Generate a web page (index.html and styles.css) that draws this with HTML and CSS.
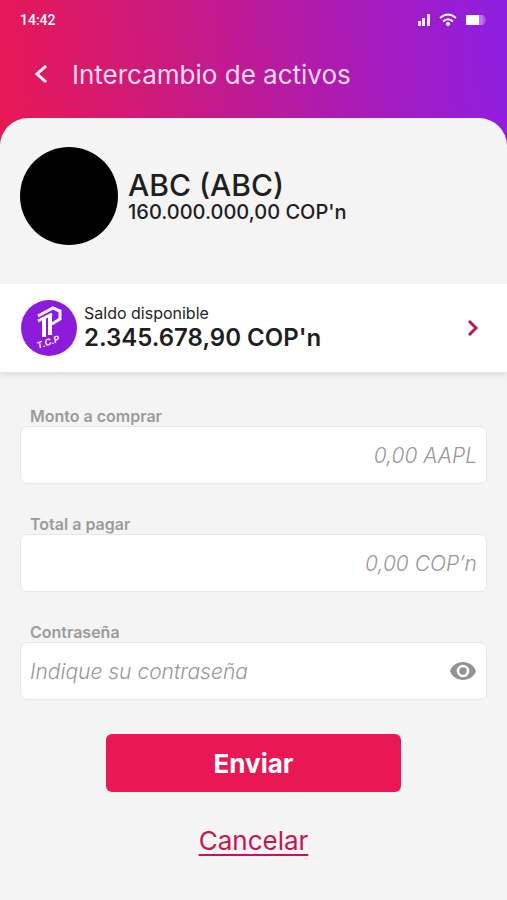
FILE: index.html
```html
<!DOCTYPE html>
<html lang="es">
<head>
    <meta charset="UTF-8">
    <meta name="viewport" content="width=device-width, initial-scale=1.0">
    <title>Intercambio de activos</title>
    <link rel="stylesheet" href="styles.css">
</head>
<body>
    <header class="header">
        <div class="status-bar">
            <span>14:42</span>
            <div class="status-icons">
                <svg width="14" height="14" viewBox="0 0 14 14" fill="#fff" opacity="0.9" aria-hidden="true">
                    <rect x="1" y="8" width="3" height="5"/>
                    <rect x="5" y="5" width="3" height="8"/>
                    <rect x="10" y="1" width="3" height="12"/>
                </svg>
                <svg width="18" height="14" viewBox="0 0 18 14" fill="none" stroke="#fff" stroke-width="2" aria-hidden="true">
                    <path d="M1 5 Q9 -2 17 5"/>
                    <path d="M4 8.500 Q9 4 14 8.500"/>
                    <circle cx="9" cy="11" r="2" fill="#fff" stroke="none"/>
                </svg>
                <svg width="22" height="14" viewBox="0 0 22 14" aria-hidden="true">
                    <path d="M2 2H18V12H2a1 1 0 0 1-1-1V3a1 1 0 0 1 1-1z" fill="#fff" opacity="0.4"/>
                    <path d="M2 2H14V12H2a1 1 0 0 1-1-1V3a1 1 0 0 1 1-1z" fill="#fff"/>
                    <path d="M18 2Q21 4 21 7Q21 10 18 12z" fill="#fff" opacity="0.25"/>
                </svg>
            </div>
        </div>
        <div class="title-bar">
            <button type="button" class="back" aria-label="Volver">
                <svg width="14" height="20" viewBox="0 0 14 20" fill="none" stroke="#fff" stroke-width="3" aria-hidden="true">
                    <path d="M12 2 L3 10 L12 18"/>
                </svg>
            </button>
            <h1>Intercambio de activos</h1>
        </div>
    </header>

    <main class="sheet">
        <section class="asset">
            <div class="asset-logo"></div>
            <div>
                <h2>ABC (ABC)</h2>
                <p class="asset-price">160.000.000,00 COP'n</p>
            </div>
        </section>

        <a href="#" class="balance">
            <svg class="balance-logo" width="58" height="58" viewBox="0 0 58 58" aria-hidden="true">
                <circle cx="29" cy="29" r="28" fill="#8d1bdc"/>
                <g fill="none" stroke="#fff">
                    <path d="M18 17 L33 9 L40 12 V20 L32 25" stroke-width="3"/>
                    <path d="M18 22 L32 15" stroke-width="3"/>
                    <path d="M24 20 V38" stroke-width="4"/>
                    <path d="M30 17 V36" stroke-width="4"/>
                </g>
                <text x="18" y="50" class="logo-text" transform="rotate(-19 18 50)">T.C.P</text>
            </svg>
            <div class="balance-info">
                <p class="balance-label">Saldo disponible</p>
                <p class="balance-amount">2.345.678,90 COP'n</p>
            </div>
            <svg width="12" height="16" viewBox="0 0 12 16" fill="none" stroke="#c2184f" stroke-width="3" aria-hidden="true">
                <path d="M2 1 L9 8 L2 15"/>
            </svg>
        </a>

        <form class="form">
            <div class="form-group">
                <label for="monto">Monto a comprar</label>
                <input type="text" id="monto" class="amount" placeholder="0,00 AAPL">
            </div>
            <div class="form-group">
                <label for="total">Total a pagar</label>
                <input type="text" id="total" class="amount" placeholder="0,00 COP’n">
            </div>
            <div class="form-group">
                <label for="password">Contraseña</label>
                <div class="password">
                    <input type="password" id="password" placeholder="Indique su contraseña">
                    <button type="button" class="show-password" aria-label="Mostrar contraseña">
                        <svg width="28" height="20" viewBox="0 0 28 20" aria-hidden="true">
                            <path fill="#929292" fill-rule="evenodd" d="M14 1C8 1 3 4.700 1 10c2 5.300 7 9 13 9s11-3.700 13-9C25 4.700 20 1 14 1zM14 16.300a6.300 6.300 0 1 1 0-12.600a6.300 6.300 0 0 1 0 12.600z"/>
                            <circle cx="14" cy="10" r="3.700" fill="#929292"/>
                        </svg>
                    </button>
                </div>
            </div>
            <button type="submit" class="btn">Enviar</button>
            <a href="#" class="cancel">Cancelar</a>
        </form>
    </main>
</body>
</html>
```

FILE: styles.css
```css
* {
    box-sizing: border-box;
}
body {
    font-family: Inter, "Open Sans", sans-serif;
    margin: 0;
    min-height: 100vh;
    display: flex;
    flex-direction: column;
    color: #1f1f1f;
    background: #f4f4f4 linear-gradient(84deg, #e91854 0%, #ca1a82 36%, #a91bb8 70%, #8e1fe2 100%) no-repeat;
    background-size: 100% 160px;
}
h1, h2, p {
    margin: 0;
}
button {
    font-family: inherit;
    border: none;
    padding: 0;
    background: none;
    cursor: pointer;
}
svg {
    display: block;
    flex-shrink: 0;
}
.header {
    height: 118px;
    padding: 10px 20px 0;
    color: #fff;
}
.status-bar {
    display: flex;
    justify-content: space-between;
    align-items: center;
    height: 20px;
    font-family: Roboto, sans-serif;
    font-size: 14px;
    font-weight: 500;
}
.status-icons {
    display: flex;
    gap: 8px;
}
.title-bar {
    display: flex;
    align-items: center;
    gap: 24px;
    height: 40px;
    margin-top: 24px;
    padding-left: 14px;
}
h1 {
    font-size: 26px;
    font-weight: 400;
    color: #ffd9f1;
}
.sheet {
    flex: 1;
    background: #f4f4f4;
    border-radius: 28px 28px 0 0;
}
.asset {
    display: flex;
    align-items: center;
    gap: 10px;
    padding: 29px 20px 39px;
}
.asset-logo {
    width: 98px;
    height: 98px;
    border-radius: 50%;
    background: #000;
}
h2 {
    font-size: 30px;
    line-height: 32px;
    font-weight: 500;
}
.asset-price {
    font-size: 20px;
    line-height: 22px;
    font-weight: 500;
}
.balance {
    display: flex;
    align-items: center;
    gap: 6px;
    height: 88px;
    padding: 0 28px 0 20px;
    background: #fff;
    color: inherit;
    text-decoration: none;
    box-shadow: 0 3px 6px rgba(0, 0, 0, 0.1);
}
.logo-text {
    font-size: 9px;
    font-weight: 600;
    font-style: italic;
    fill: #fff;
}
.balance-info {
    flex: 1;
}
.balance-label {
    font-size: 16px;
    line-height: 20px;
}
.balance-amount {
    font-size: 24px;
    line-height: 30px;
    font-weight: 600;
}
.form {
    display: flex;
    flex-direction: column;
    align-items: center;
    padding: 34px 20px 40px;
}
.form-group {
    width: 100%;
    margin-bottom: 30px;
}
label {
    display: block;
    padding-left: 10px;
    font-size: 16px;
    line-height: 20px;
    font-weight: 600;
    color: #9b9b9b;
}
input {
    display: block;
    width: 100%;
    height: 58px;
    padding: 0 9px;
    border: 1px solid #e6e6e6;
    border-radius: 7px;
    background: #fff;
    font-family: inherit;
    font-size: 21px;
    color: #1f1f1f;
}
input::placeholder {
    color: #989898;
    font-style: italic;
    font-weight: 300;
    opacity: 1;
}
.amount {
    text-align: right;
}
.password {
    position: relative;
}
.password input {
    padding-right: 48px;
}
.show-password {
    position: absolute;
    top: 19px;
    right: 10px;
}
.btn {
    width: 63%;
    height: 58px;
    margin-top: 4px;
    border-radius: 6px;
    background: #e91854;
    color: #fff;
    font-size: 26px;
    font-weight: 700;
}
.cancel {
    margin-top: 34px;
    font-size: 26px;
    line-height: 30px;
    color: #c2184f;
    text-decoration-thickness: 2px;
    text-underline-offset: 4px;
}
```
